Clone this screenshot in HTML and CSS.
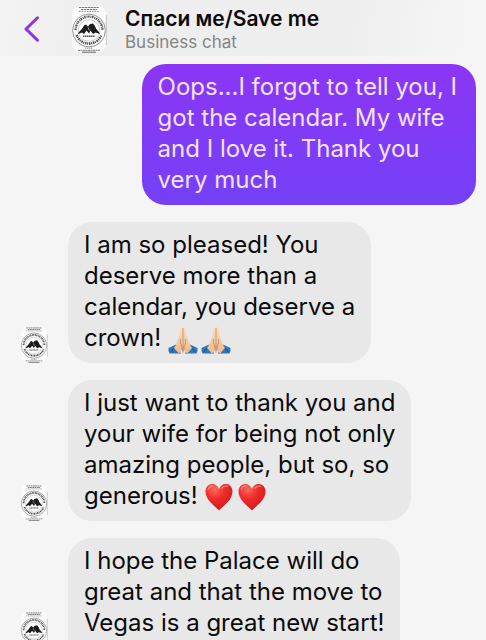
FILE: index.html
```html
<!DOCTYPE html>
<html lang="en">
<head>
    <meta charset="UTF-8">
    <meta name="viewport" content="width=device-width, initial-scale=1.0">
    <title>Спаси ме/Save me</title>
    <link rel="stylesheet" href="styles.css">
</head>
<body>
    <!-- shared icons -->
    <svg class="icons" aria-hidden="true">
        <defs>
            <linearGradient id="skin" x1="0" y1="0" x2="0" y2="1">
                <stop offset="0" stop-color="#fbe3c6"/>
                <stop offset="1" stop-color="#e9b98d"/>
            </linearGradient>
            <radialGradient id="red" cx="0.35" cy="0.2" r="0.9">
                <stop offset="0" stop-color="#ff6a5c"/>
                <stop offset="0.4" stop-color="#ee2c2b"/>
                <stop offset="1" stop-color="#c9161c"/>
            </radialGradient>
        </defs>
        <symbol id="logo" viewBox="0 0 36 48">
            <rect x="1" y="1" width="34" height="46" rx="8" fill="#fbfbfb"/>
            <path d="M8 2.5H28M10 4.5H26" stroke="#777" stroke-width="1.2" stroke-dasharray="2.4 .5"/>
            <path d="M8 6.4H28" stroke="#888" stroke-width="1" stroke-dasharray="1.6 1"/>
            <path d="M35.3 10V40" stroke="#bbb" stroke-width=".8"/>
            <circle cx="18" cy="25.5" r="16.4" fill="#fff" stroke="#777" stroke-width=".8"/>
            <path d="M4.6 25A13.4 13.4 0 0 1 31.4 25" fill="none" stroke="#555" stroke-width="2.4" stroke-dasharray="1.5 .9 1 .6"/>
            <path d="M5.5 30A13.4 13.4 0 0 0 30.5 30" fill="none" stroke="#444" stroke-width="2.4" stroke-dasharray="1.5 .7 1 .8"/>
            <circle cx="18" cy="25.5" r="10.8" fill="#fff" stroke="#999" stroke-width=".5"/>
            <path d="M7 29C8 26 11 25 13 20.5L15 19.5 17 21.5 19 19 22 18.5 24 21C25 25 28 26 29 29L24.5 27.5 22 29 19.5 25.5 18 28.5 15.5 25.5 13 29 11 27.5Z" fill="#1c1c1c"/>
            <path d="M17 22.5L18.5 25.5" stroke="#ddd" stroke-width=".7"/>
            <path d="M12 31.2H24" stroke="#555" stroke-width="1.4" stroke-dasharray="1.6 .4"/>
            <path d="M14 43.2H22" stroke="#999" stroke-width="1.2" stroke-dasharray="1.3 .7"/>
            <path d="M7 45.3H29" stroke="#777" stroke-width="1" stroke-dasharray="2 .5"/>
            <path d="M11 47.2H25" stroke="#777" stroke-width="1.2"/>
        </symbol>
        <symbol id="pray" viewBox="0 0 30 30">
            <path d="M.5 24L8 20.5 13 29.5H1.5Q0 27 .5 24Z" fill="#2f75ba"/>
            <path d="M29.5 24L22 20.5 17 29.5H28.5Q30 27 29.5 24Z" fill="#2f75ba"/>
            <path d="M3 28Q4 24.5 8 23.5M27 28Q26 24.5 22 23.5" fill="none" stroke="#1d558f" stroke-width="1"/>
            <path d="M14.8 3.5Q13.8.8 12.6 2.2L11.2 12.5Q9 17 8.3 20.5L6 24 10.8 29.5Q14.8 27 14.8 21Z" fill="url(#skin)"/>
            <path d="M15.2 3.5Q16.2.8 17.4 2.2L18.8 12.5Q21 17 21.7 20.5L24 24 19.2 29.5Q15.2 27 15.2 21Z" fill="url(#skin)"/>
            <path d="M15 4V22M12.6 15Q11.5 19 14 23M17.4 15Q18.5 19 16 23" fill="none" stroke="#c0805a" stroke-width=".8"/>
            <path d="M13.2 24L15 21.5 16.8 24 15 29.5Z" fill="#b9683f" opacity=".6"/>
        </symbol>
        <symbol id="heart" viewBox="0 0 30 30">
            <path d="M15 28.5C12 25 1.5 18.5 1.5 9.5C1.5 5 4.5 2 8.2 2C11.5 2 14 4 15 7C16 4 18.5 2 21.8 2C25.5 2 28.5 5 28.5 9.5C28.5 18.5 18 25 15 28.5Z" fill="url(#red)"/>
            <path d="M4 7.5Q5.5 3.8 9 4M18 6Q20 3.5 23.5 4.3" fill="none" stroke="#ff9a8c" stroke-width="1.3" stroke-linecap="round" opacity=".7"/>
        </symbol>
    </svg>

    <div class="chat">
        <header class="chat-header">
            <button class="back-btn" type="button" aria-label="Back">
                <svg viewBox="0 0 16 26" width="16" height="26"><path d="M13.5 1.8L2 13 13.5 24.2" fill="none" stroke="#8a32e6" stroke-width="3" stroke-linecap="round" stroke-linejoin="round"/></svg>
            </button>
            <svg class="header-logo" role="img" aria-label="Спаси ме"><use href="#logo"/></svg>
            <div class="title">
                <h1>Спаси ме/Save me</h1>
                <p>Business chat</p>
            </div>
        </header>

        <main class="messages">
            <div class="message sent">
                <p class="bubble">Oops...I forgot to tell you, I<br>got the calendar. My wife<br>and I love it. Thank you<br>very much</p>
            </div>
            <div class="message">
                <svg class="avatar" aria-hidden="true"><use href="#logo"/></svg>
                <p class="bubble">I am so pleased! You<br>deserve more than a<br>calendar, you deserve a<br>crown! <svg class="emoji" role="img" aria-label="folded hands"><use href="#pray"/></svg><svg class="emoji" role="img" aria-label="folded hands"><use href="#pray"/></svg></p>
            </div>
            <div class="message">
                <svg class="avatar" aria-hidden="true"><use href="#logo"/></svg>
                <p class="bubble">I just want to thank you and<br>your wife for being not only<br>amazing people, but so, so<br>generous! <svg class="emoji" role="img" aria-label="red heart"><use href="#heart"/></svg><svg class="emoji" role="img" aria-label="red heart"><use href="#heart"/></svg></p>
            </div>
            <div class="message">
                <svg class="avatar" aria-hidden="true"><use href="#logo"/></svg>
                <p class="bubble">I hope the Palace will do<br>great and that the move to<br>Vegas is a great new start!<br>good and that the move is</p>
            </div>
        </main>
    </div>
</body>
</html>
```

FILE: styles.css
```css
* {
    box-sizing: border-box;
}

body {
    margin: 0;
    font-family: Inter, "Liberation Sans", sans-serif;
    background-color: #f5f5f5;
    color: #0b0b0b;
}

.icons {
    position: absolute;
    width: 0;
    height: 0;
}

.chat {
    display: flex;
    flex-direction: column;
    height: 100vh;
}

.chat-header {
    display: flex;
    align-items: center;
    flex-shrink: 0;
    padding: 5px 24px 3px;
    background: linear-gradient(100deg, #f3f3f3, #eeeeee 20%, #eeeeee 70%, #f5f5f5 95%);
}

.back-btn {
    display: flex;
    padding: 0;
    border: none;
    background: none;
    cursor: pointer;
}

.header-logo {
    width: 36px;
    height: 48px;
    margin: 0 18px 0 31px;
}

.title h1 {
    margin: 0;
    font-size: 21px;
    line-height: 26px;
    font-weight: 600;
}

.title p {
    margin: 0;
    font-size: 17px;
    line-height: 20px;
    color: #858585;
}

.messages {
    display: flex;
    flex-direction: column;
    gap: 17px;
    flex: 1;
    min-height: 0;
    padding: 8px 10px 0 20px;
    overflow: hidden;
}

.message {
    display: flex;
    flex-shrink: 0;
    align-items: flex-end;
    gap: 20px;
}

.message.sent {
    justify-content: flex-end;
}

.avatar {
    position: sticky;
    bottom: -8px;
    flex-shrink: 0;
    width: 28px;
    height: 37px;
}

.bubble {
    margin: 0;
    padding: 7px 16px 10px;
    border-radius: 24px;
    background-color: #e8e8e8;
    font-size: 24px;
    line-height: 31px;
    white-space: nowrap;
}

.sent .bubble {
    padding-right: 19px;
    background: linear-gradient(#8b36f4, #7440f6);
    color: #f3e2ff;
}

/* negative margins keep the emoji from making its line taller */
.emoji {
    width: 30px;
    height: 30px;
    margin: -4px 3px -4px 0;
    vertical-align: -4px;
}
```
